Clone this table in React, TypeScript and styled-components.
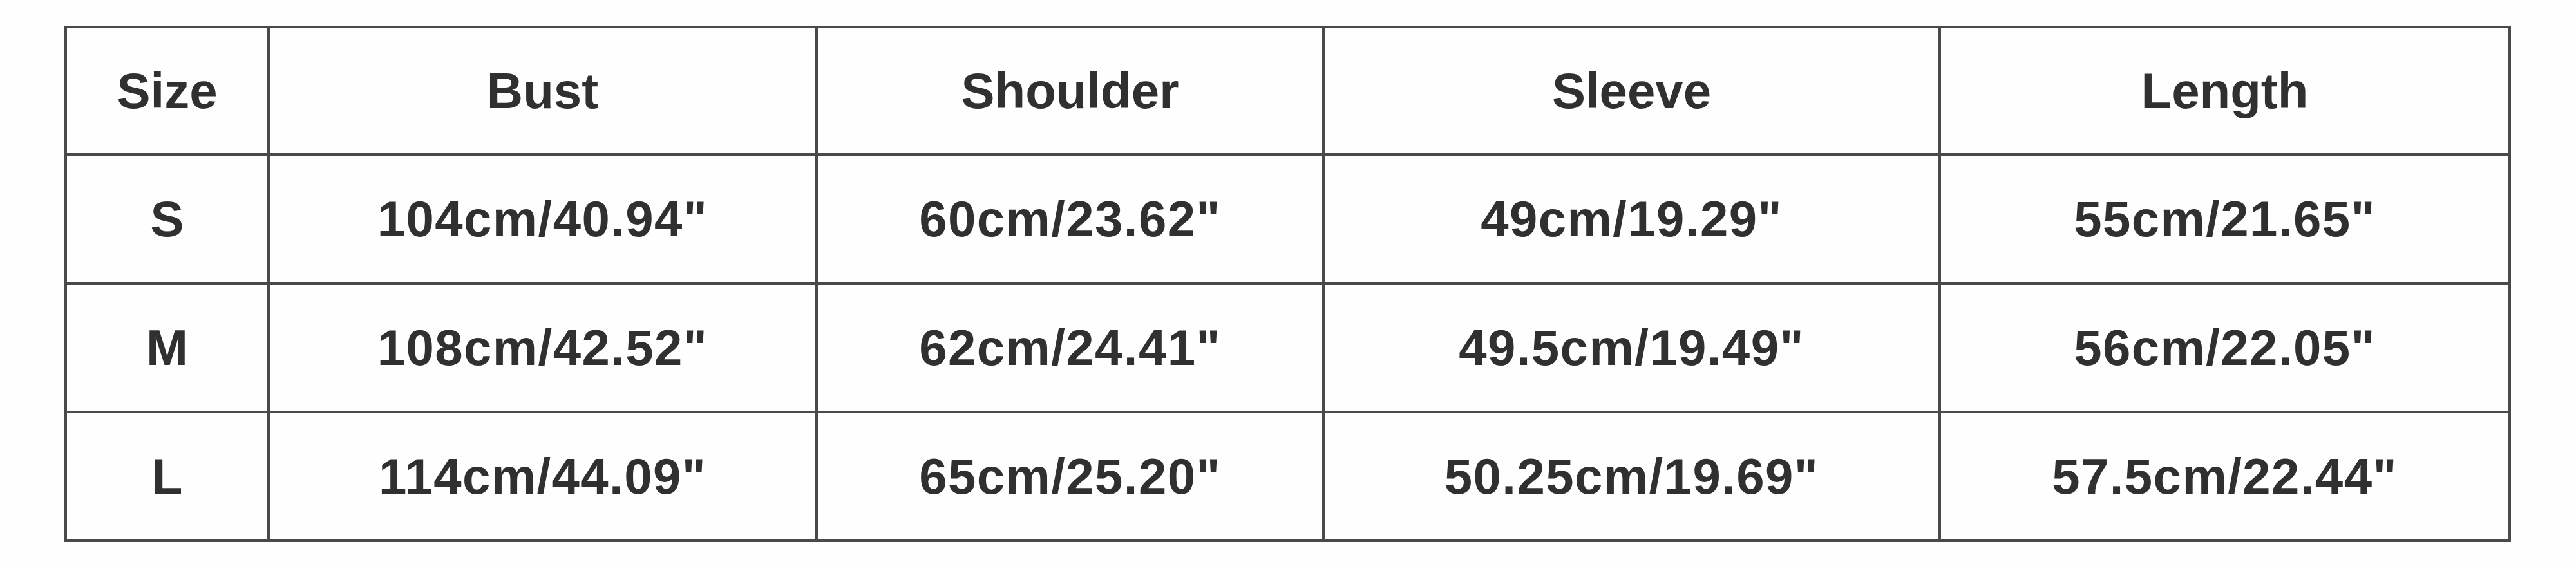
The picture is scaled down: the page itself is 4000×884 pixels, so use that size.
import React from "react";
import styled, { createGlobalStyle } from "styled-components";

const GlobalStyle = createGlobalStyle`
  html, body {
    margin: 0;
    padding: 0;
    background: #fefefe;
  }
`;

const Page = styled.div`
  width: 4000px;
  height: 884px;
  box-sizing: border-box;
  padding: 40px 0 0 100px;
  background: #fefefe;
  font-family: "Liberation Sans", Arial, sans-serif;
`;

const Table = styled.div`
  display: grid;
  grid-template-columns: 315px 851px 787px 957px 885px;
  grid-template-rows: 198px 200px 200px 200px;
  width: max-content;
  border-top: 4px solid #4a4a4a;
  border-left: 4px solid #4a4a4a;
`;

const Cell = styled.div<{ $num?: boolean }>`
  box-sizing: border-box;
  display: flex;
  align-items: center;
  justify-content: center;
  border-right: 4px solid #4a4a4a;
  border-bottom: 4px solid #4a4a4a;
  font-size: 78px;
  font-weight: 700;
  letter-spacing: ${(p) => (p.$num ? "1.4px" : "0")};
  color: #303030;
  white-space: nowrap;
`;

const headers = ["Size", "Bust", "Shoulder", "Sleeve", "Length"];

const rows = [
  ["S", '104cm/40.94"', '60cm/23.62"', '49cm/19.29"', '55cm/21.65"'],
  ["M", '108cm/42.52"', '62cm/24.41"', '49.5cm/19.49"', '56cm/22.05"'],
  ["L", '114cm/44.09"', '65cm/25.20"', '50.25cm/19.69"', '57.5cm/22.44"'],
];

export default function App() {
  return (
    <>
      <GlobalStyle />
      <Page>
        <Table>
          {headers.map((h) => (
            <Cell key={h}>{h}</Cell>
          ))}
          {rows.map((r) =>
            r.map((v, i) => (
              <Cell $num={i > 0} key={r[0] + i}>
                {v}
              </Cell>
            ))
          )}
        </Table>
      </Page>
    </>
  );
}
